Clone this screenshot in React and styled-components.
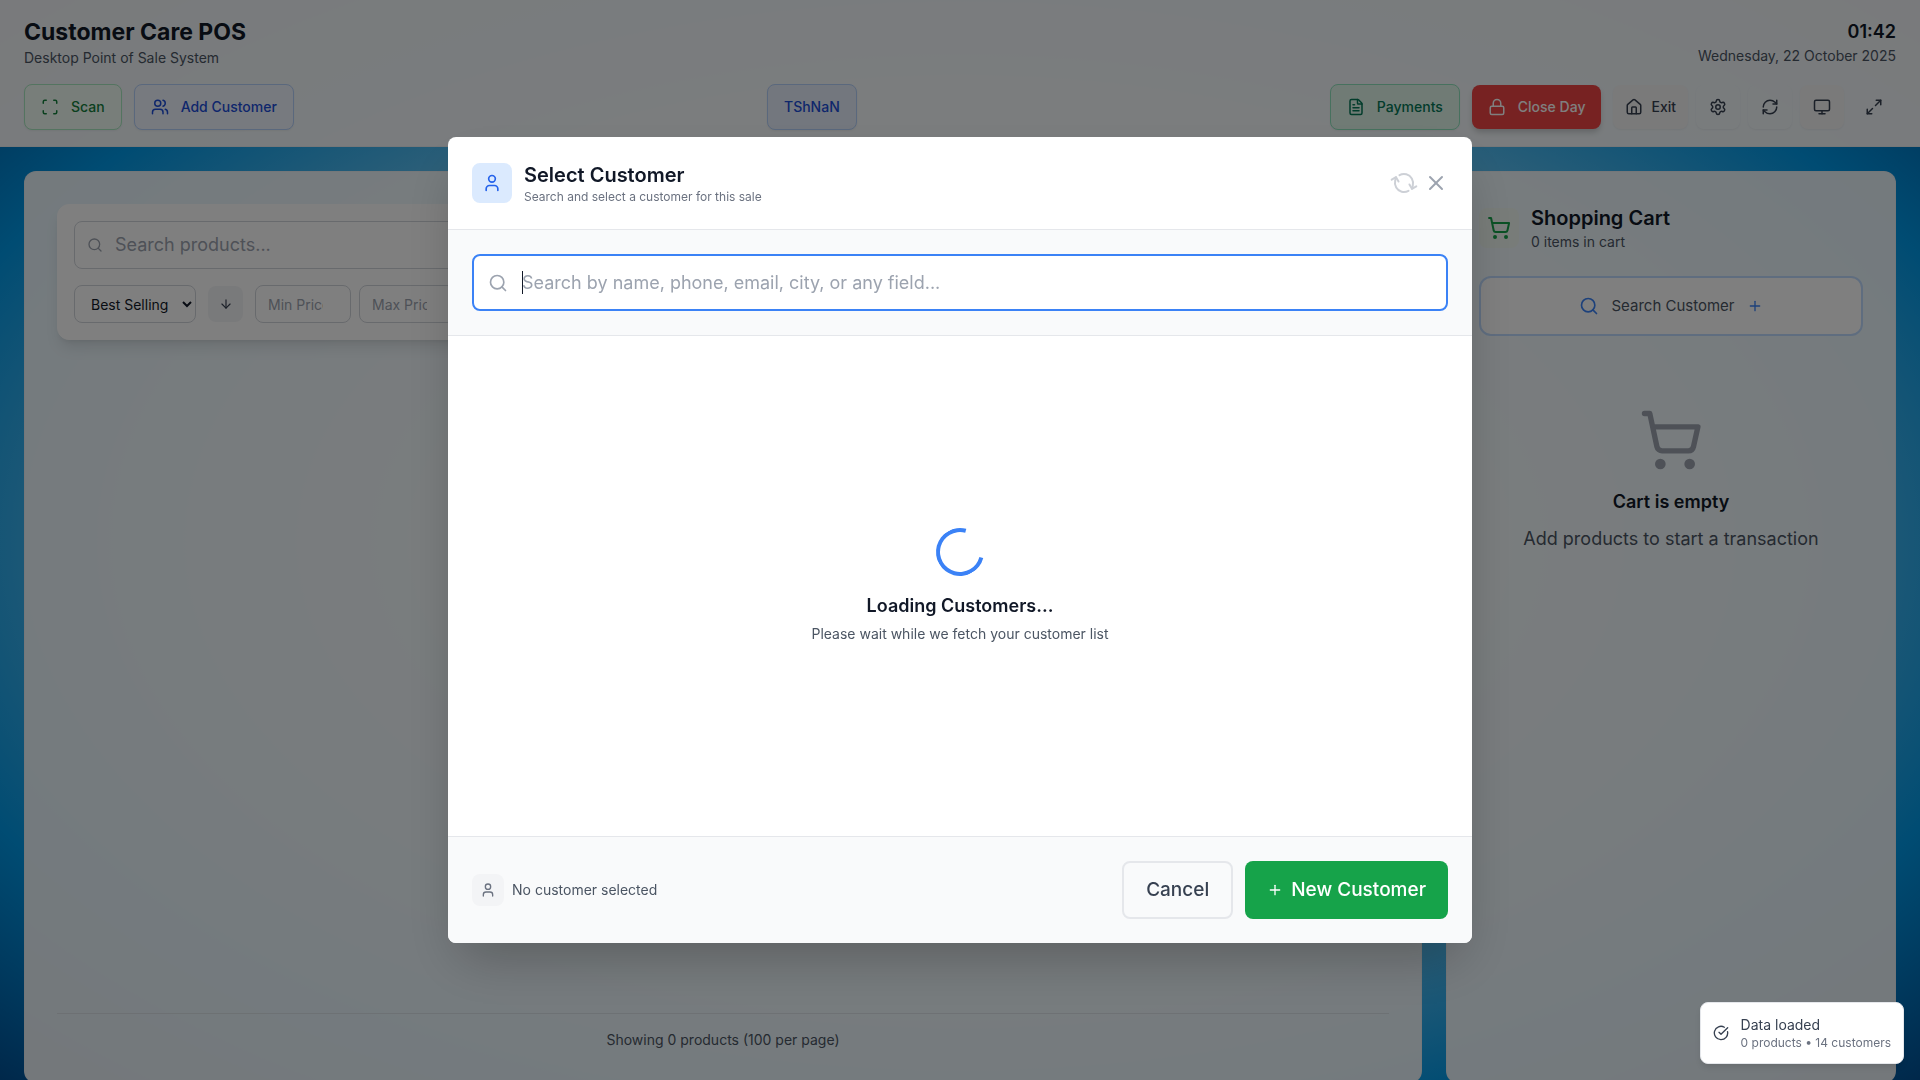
import React from "react";
import styled, { createGlobalStyle, css } from "styled-components";
import {
  ArrowDown,
  CircleCheckBig,
  FileText,
  House,
  Lock,
  Maximize2,
  Monitor,
  Plus,
  RefreshCw,
  Scan,
  Search,
  Settings,
  ShoppingCart,
  User,
  Users,
  X,
} from "lucide-react";

const GlobalStyle = createGlobalStyle`
  *, *::before, *::after { box-sizing: border-box; }
  html, body { margin: 0; height: 100%; }
  body {
    font-family: Inter, "Liberation Sans", sans-serif;
    font-size: 14px;
    line-height: 20px;
    color: #111827;
    overflow: hidden;
  }
  button, input, select { font: inherit; color: inherit; margin: 0; }
  button { cursor: pointer; }
  h1, h2, h3, p { margin: 0; }
  svg { display: block; flex: none; }
`;

const Page = styled.div`
  min-height: calc(100vh + 3px);
  display: flex;
  flex-direction: column;
  background: radial-gradient(
    ellipse at center,
    #ffffff 0%,
    #b4e2fa 35%,
    #62c2f2 60%,
    #0098e6 80%,
    #004f94 100%
  );
`;

/* ---------- top bar ---------- */

const TopBar = styled.header`
  display: flex;
  flex-direction: column;
  gap: 16px;
  padding: 16px 24px;
  background: rgba(252, 252, 252, 0.96);
  border-bottom: 1px solid rgba(229, 231, 235, 0.6);
`;

const BarRow = styled.div`
  display: flex;
  align-items: center;
  justify-content: space-between;
`;

const AppTitle = styled.h1`
  font-size: 23px;
  line-height: 32px;
  font-weight: 700;
`;

const Muted = styled.p`
  color: #4b5563;
`;

const Clock = styled.div`
  text-align: right;
`;

const Time = styled.div`
  font-size: 18px;
  line-height: 28px;
  font-weight: 600;
`;

const Group = styled.div`
  display: flex;
  align-items: center;
  gap: ${(p) => p.$gap || 12}px;
`;

const tones = {
  green: css`
    color: #15803d;
    background: #f0fdf4;
    border: 1px solid #a9e8c0;
  `,
  blue: css`
    color: #1d4ed8;
    background: #eff4ff;
    border: 1px solid #b4d0fa;
  `,
  sky: css`
    color: #1d4ed8;
    background: #e6effc;
    border: 1px solid #b4d0fa;
  `,
  emerald: css`
    color: #047857;
    background: #e0f6ea;
    border: 1px solid #8fe3bd;
  `,
  red: css`
    color: #ffffff;
    background: #ef4444;
    border: 0;
    box-shadow: 0 4px 6px -1px rgba(0, 0, 0, 0.2);
  `,
};

const ActionButton = styled.button`
  display: flex;
  align-items: center;
  gap: 12px;
  padding: 12px 16px;
  border-radius: 8px;
  font-weight: 500;
  box-shadow: 0 1px 2px rgba(0, 0, 0, 0.05);
  ${(p) => tones[p.$tone]}
`;

const PlainButton = styled.button`
  display: flex;
  align-items: center;
  justify-content: center;
  gap: 8px;
  min-width: 44px;
  height: 44px;
  padding: 0 12px;
  border: 0;
  border-radius: 8px;
  font-weight: 500;
  color: #374151;
  background: ${(p) => (p.$filled ? "#f5f4f5" : "transparent")};
  box-shadow: ${(p) => (p.$flat ? "none" : "0 1px 2px rgba(0, 0, 0, 0.05)")};
`;

/* ---------- workspace ---------- */

const Workspace = styled.main`
  flex: 1;
  display: grid;
  grid-template-columns: minmax(0, 1fr) 450px;
  gap: 24px;
  padding: 24px 24px 0;
`;

const Panel = styled.section`
  display: flex;
  flex-direction: column;
  padding: 32px;
  border: 1px solid rgba(229, 231, 235, 0.5);
  border-radius: 12px;
  background: rgba(250, 252, 253, 0.93);
`;

const FilterCard = styled.div`
  display: flex;
  flex-direction: column;
  gap: 16px;
  padding: 16px;
  border: 1px solid #ffffff;
  border-radius: 12px;
  background: #ffffff;
  box-shadow: 0 10px 15px -3px rgba(0, 0, 0, 0.1), 0 4px 6px -4px rgba(0, 0, 0, 0.1);
`;

const ProductSearch = styled.label`
  display: flex;
  align-items: center;
  gap: 12px;
  height: 48px;
  padding: 0 12px;
  border: 1px solid #d1d5db;
  border-radius: 8px;
  color: #9ca3af;
`;

const BareInput = styled.input`
  flex: 1;
  min-width: 0;
  padding: 0;
  border: 0;
  outline: 0;
  background: transparent;
  font-size: 18px;
  line-height: 28px;
  color: #111827;
  &::placeholder {
    color: #9ca3af;
    opacity: 1;
  }
  &:focus:placeholder-shown {
    caret-color: transparent;
    background: linear-gradient(#111827, #111827) left center / 1px 23px no-repeat;
  }
`;

const SortSelect = styled.select`
  width: 122px;
  height: 38px;
  padding: 0 0 0 12px;
  border: 1px solid #d1d5db;
  border-radius: 8px;
  background: #ffffff;
`;

const SortButton = styled.button`
  display: grid;
  place-items: center;
  width: 35px;
  height: 36px;
  padding: 0;
  border: 0;
  border-radius: 8px;
  background: #f3f4f6;
  color: #374151;
`;

const PriceInput = styled.input`
  width: 96px;
  height: 38px;
  padding: 0 12px;
  border: 1px solid #d1d5db;
  border-radius: 8px;
  background: #ffffff;
  &::placeholder {
    color: #9ca3af;
    opacity: 1;
  }
`;

const Pager = styled.footer`
  margin-top: auto;
  padding-top: 16px;
  border-top: 1px solid rgba(209, 213, 219, 0.6);
  color: #4b5563;
  text-align: center;
`;

const CartBadge = styled.div`
  display: grid;
  place-items: center;
  width: 40px;
  height: 40px;
  border-radius: 8px;
  background: #f0f9f2;
  color: #16a34a;
`;

const SectionTitle = styled.h2`
  font-size: 20px;
  line-height: 28px;
  font-weight: 600;
`;

const CustomerButton = styled.button`
  display: flex;
  align-items: center;
  justify-content: center;
  gap: 12px;
  height: 60px;
  margin-top: 24px;
  border: 2px solid #bfdbfe;
  border-radius: 12px;
  background: #ffffff;
  font-size: 15px;
  color: #4b5563;
  svg {
    color: #3b82f6;
  }
`;

const EmptyCart = styled.div`
  display: flex;
  flex-direction: column;
  align-items: center;
  padding-top: 72px;
  text-align: center;
  > svg {
    color: #9ca3af;
  }
`;

const StateTitle = styled.h3`
  margin-top: 16px;
  font-size: 18px;
  line-height: 28px;
  font-weight: 600;
`;

const EmptyText = styled.p`
  margin-top: 8px;
  font-size: 18px;
  line-height: 30px;
  color: #4b5563;
`;

/* ---------- customer dialog ---------- */

const Backdrop = styled.div`
  position: fixed;
  inset: 0;
  display: flex;
  align-items: center;
  justify-content: center;
  padding: 24px;
  background: rgba(0, 0, 0, 0.5);
`;

const Dialog = styled.div`
  width: 100%;
  max-width: 1024px;
  border-radius: 8px;
  overflow: hidden;
  background: #ffffff;
  box-shadow: 0 25px 50px -12px rgba(0, 0, 0, 0.25);
`;

const DialogHeader = styled.header`
  display: flex;
  align-items: center;
  justify-content: space-between;
  padding: 24px;
  border-bottom: 1px solid #e5e7eb;
`;

const UserBadge = styled.div`
  display: grid;
  place-items: center;
  width: ${(p) => p.$size}px;
  height: ${(p) => p.$size}px;
  border-radius: 8px;
  background: ${(p) => (p.$active ? "#dbeafe" : "#f3f4f6")};
  color: ${(p) => (p.$active ? "#2563eb" : "#6b7280")};
`;

const Caption = styled.p`
  font-size: 12px;
  line-height: 16px;
  color: #6b7280;
`;

const GhostButton = styled.button`
  padding: 0;
  border: 0;
  background: transparent;
  color: #9ca3af;
  &:disabled {
    opacity: 0.5;
  }
`;

const SpinningIcon = styled(RefreshCw)`
  transform: rotate(60deg);
`;

const SearchStrip = styled.div`
  padding: 24px;
  border-bottom: 1px solid #e5e7eb;
  background: #f9fafb;
`;

const CustomerSearch = styled.label`
  display: flex;
  align-items: center;
  gap: 14px;
  height: 57px;
  padding: 0 14px;
  border: 2px solid #3b82f6;
  border-radius: 8px;
  background: #ffffff;
  color: #9ca3af;
`;

const DialogBody = styled.div`
  display: flex;
  flex-direction: column;
  align-items: center;
  justify-content: center;
  min-height: 500px;
`;

const Spinner = styled.div`
  width: 48px;
  height: 48px;
  border: 4px solid #3b82f6;
  border-top-color: transparent;
  border-radius: 50%;
  transform: rotate(60deg);
`;

const LoadingText = styled.p`
  margin-top: 4px;
  color: #4b5563;
`;

const DialogFooter = styled.footer`
  display: flex;
  align-items: center;
  justify-content: space-between;
  padding: 24px;
  border-top: 1px solid #e5e7eb;
  background: #f9fafb;
`;

const DialogButton = styled.button`
  display: flex;
  align-items: center;
  gap: 8px;
  height: 58px;
  padding: 0 22px;
  border: ${(p) => (p.$primary ? "0" : "2px solid #e5e7eb")};
  border-radius: 8px;
  background: ${(p) => (p.$primary ? "#16a34a" : "transparent")};
  color: ${(p) => (p.$primary ? "#ffffff" : "#374151")};
  font-size: 19px;
  font-weight: 500;
`;

/* ---------- toast ---------- */

const Toast = styled.div`
  position: fixed;
  right: 16px;
  bottom: 16px;
  display: flex;
  align-items: center;
  gap: 12px;
  padding: 12px;
  border: 1px solid #e5e7eb;
  border-radius: 8px;
  background: #ffffff;
  color: #374151;
  box-shadow: 0 4px 6px -1px rgba(0, 0, 0, 0.1);
`;

export default function App() {
  return (
    <>
      <GlobalStyle />
      <Page>
        <TopBar>
          <BarRow>
            <div>
              <AppTitle>Customer Care POS</AppTitle>
              <Muted>Desktop Point of Sale System</Muted>
            </div>
            <Clock>
              <Time>01:42</Time>
              <Muted>Wednesday, 22 October 2025</Muted>
            </Clock>
          </BarRow>
          <BarRow>
            <Group>
              <ActionButton $tone="green"><Scan size={18} />Scan</ActionButton>
              <ActionButton $tone="blue"><Users size={18} />Add Customer</ActionButton>
            </Group>
            <ActionButton $tone="sky">TShNaN</ActionButton>
            <Group>
              <ActionButton $tone="emerald"><FileText size={18} />Payments</ActionButton>
              <ActionButton $tone="red"><Lock size={18} />Close Day</ActionButton>
              <Group $gap={8}>
                <PlainButton $filled><House size={18} />Exit</PlainButton>
                <PlainButton aria-label="Settings"><Settings size={18} /></PlainButton>
                <PlainButton aria-label="Refresh"><RefreshCw size={18} /></PlainButton>
                <PlainButton $filled aria-label="Display"><Monitor size={18} /></PlainButton>
                <PlainButton $flat aria-label="Full screen"><Maximize2 size={18} /></PlainButton>
              </Group>
            </Group>
          </BarRow>
        </TopBar>

        <Workspace>
          <Panel>
            <FilterCard>
              <ProductSearch>
                <Search size={16} />
                <BareInput type="text" placeholder="Search products..." aria-label="Search products" />
              </ProductSearch>
              <Group>
                <SortSelect aria-label="Sort by" defaultValue="best">
                  <option value="best">Best Selling</option>
                </SortSelect>
                <SortButton aria-label="Descending"><ArrowDown size={14} /></SortButton>
                <Group $gap={8}>
                  <PriceInput type="number" placeholder="Min Price" aria-label="Minimum price" />
                  <PriceInput type="number" placeholder="Max Price" aria-label="Maximum price" />
                </Group>
              </Group>
            </FilterCard>
            <Pager>Showing 0 products (100 per page)</Pager>
          </Panel>

          <Panel as="aside">
            <Group>
              <CartBadge><ShoppingCart size={24} /></CartBadge>
              <div>
                <SectionTitle>Shopping Cart</SectionTitle>
                <Muted>0 items in cart</Muted>
              </div>
            </Group>
            <CustomerButton>
              <Search size={20} />
              Search Customer
              <Plus size={16} />
            </CustomerButton>
            <EmptyCart>
              <ShoppingCart size={64} />
              <StateTitle>Cart is empty</StateTitle>
              <EmptyText>Add products to start a transaction</EmptyText>
            </EmptyCart>
          </Panel>
        </Workspace>
      </Page>

      <Backdrop>
        <Dialog role="dialog" aria-modal="true" aria-labelledby="dialog-title">
          <DialogHeader>
            <Group>
              <UserBadge $size={40} $active><User size={20} /></UserBadge>
              <div>
                <SectionTitle id="dialog-title">Select Customer</SectionTitle>
                <Caption>Search and select a customer for this sale</Caption>
              </div>
            </Group>
            <Group $gap={8}>
              <GhostButton disabled aria-label="Reload customers"><SpinningIcon size={24} /></GhostButton>
              <GhostButton aria-label="Close"><X size={24} /></GhostButton>
            </Group>
          </DialogHeader>
          <SearchStrip>
            <CustomerSearch>
              <Search size={20} />
              <BareInput
                type="text"
                autoFocus
                placeholder="Search by name, phone, email, city, or any field..."
                aria-label="Search customers"
              />
            </CustomerSearch>
          </SearchStrip>
          <DialogBody>
            <Spinner />
            <StateTitle>Loading Customers...</StateTitle>
            <LoadingText>Please wait while we fetch your customer list</LoadingText>
          </DialogBody>
          <DialogFooter>
            <Group $gap={8}>
              <UserBadge $size={32}><User size={16} /></UserBadge>
              <Muted>No customer selected</Muted>
            </Group>
            <Group>
              <DialogButton>Cancel</DialogButton>
              <DialogButton $primary><Plus size={16} />New Customer</DialogButton>
            </Group>
          </DialogFooter>
        </Dialog>
      </Backdrop>

      <Toast role="status">
        <CircleCheckBig size={16} />
        <div>
          <div>Data loaded</div>
          <Caption>0 products • 14 customers</Caption>
        </div>
      </Toast>
    </>
  );
}
